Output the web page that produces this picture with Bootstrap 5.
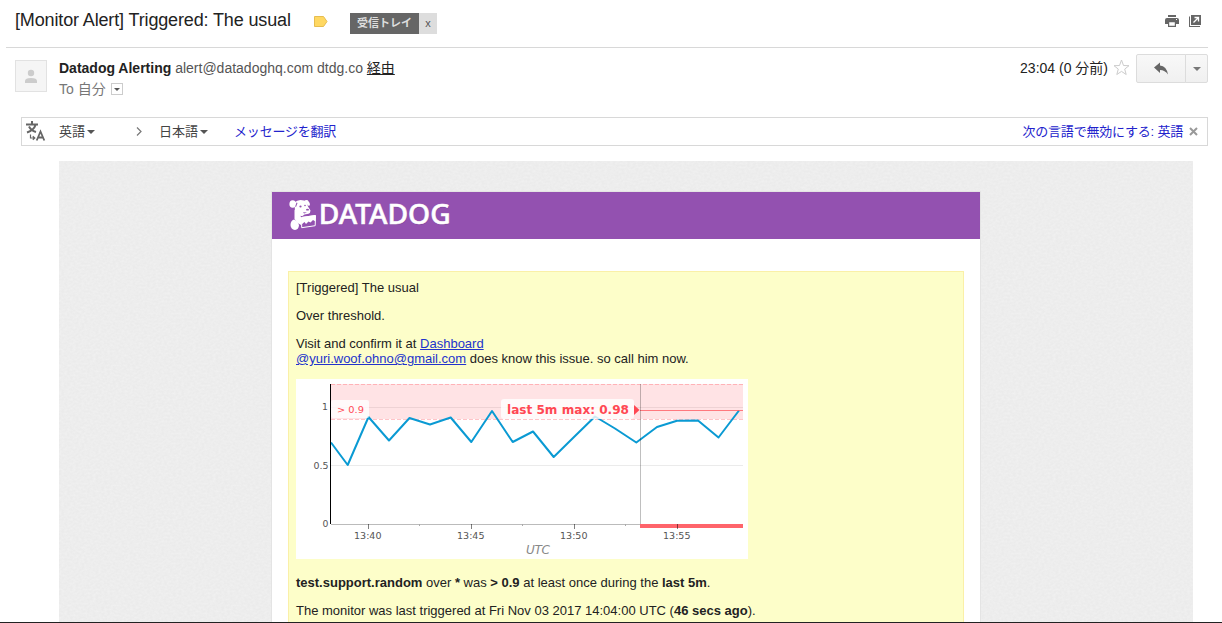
<!DOCTYPE html>
<html lang="ja">
<head>
<meta charset="utf-8">
<title>[Monitor Alert] Triggered: The usual</title>
<link href="https://cdn.jsdelivr.net/npm/bootstrap@5.3.0/dist/css/bootstrap.min.css" rel="stylesheet">
<script src="https://cdn.jsdelivr.net/npm/bootstrap@5.3.0/dist/js/bootstrap.bundle.min.js"></script>
<style>
  body { font-family: "Liberation Sans", "Noto Sans CJK JP", sans-serif; font-size: 13px; line-height: 15px; color: #222; background: #fff; }
  svg { display: block; flex: none; }
  .mail-window { height: 623px; border-bottom: 1px solid #222; }
  .subject-bar { height: 48px; margin-left: 6px; width: 1202px; padding: 0 6px 7px 9px; border-bottom: 1px solid #d8d8d8; }
  .subject { font-size: 18px; line-height: 24px; font-weight: 400; width: 298px; letter-spacing: -.14px; }
  .inbox-label { height: 21px; margin: 6px 0 0 21px; font-size: 11px; line-height: 21px; }
  .inbox-name { width: 69px; background: #666; color: #ddd; font-weight: 700; }
  .inbox-x { width: 18px; background: #ddd; color: #555; }
  .header-tools { padding-top: 2px; }
  .sender-row { height: 69px; width: 1193px; margin-left: 15px; padding-top: 6px; }
  .avatar { width: 32px; height: 32px; margin: 6px 12px 0 0; border: 1px solid #e2e2e2; background: #f5f5f5; }
  .sender { font-size: 14px; line-height: 20px; padding-top: 4px; color: #555; }
  .sender strong, .via { color: #222; }
  .recipient { color: #777; padding-top: 1px; }
  .details-arrow { width: 12px; height: 12px; margin-left: 5px; border: 1px solid #ccc; }
  .caret { width: 0; height: 0; border: 4px solid transparent; border-top-color: #555; border-bottom: 0; }
  .caret-small { border-width: 3px 3px 0; }
  .stamp { font-size: 14px; line-height: 20px; padding-top: 4px; white-space: nowrap; }
  .reply-group { width: 72px; height: 29px; margin-left: 6px; }
  .reply-group .btn { border: 1px solid #dcdcdc; border-radius: 2px; background: linear-gradient(#f8f8f8, #f0f0f0); }
  .btn-group > .btn.reply-main { flex: 0 0 50px; }
  .btn-group > .btn.reply-more { flex: 0 0 23px; }
  .reply-more .caret { border-top-color: #777; }
  .translate-bar { width: 1187px; height: 29px; margin-left: 21px; border: 1px solid #d8d8d8; color: #444; line-height: 20px; }
  .translate-bar .caret { margin-left: 2px; }
  .to-arrow { margin-left: 41px; }
  .lang-to { margin-left: 16px; }
  .blue-link, .blue-link:hover { color: #2222cc; }
  .translate-link { margin-left: 26px; letter-spacing: -.2px; }
  .disable-link { letter-spacing: -.2px; }
  .close-mark { margin: 0 9px 0 6px; }
  .mail-body { margin: 15px 0 0 59px; width: 1134px; height: 461px; padding-top: 31px; background-color: #ebebeb;
    background-image: url("data:image/svg+xml,%3Csvg xmlns='http://www.w3.org/2000/svg' width='120' height='120'%3E%3Cfilter id='f' x='0' y='0' width='1' height='1'%3E%3CfeTurbulence type='fractalNoise' baseFrequency='.35 .5' numOctaves='2' stitchTiles='stitch'/%3E%3CfeColorMatrix values='0 0 0 0 1 0 0 0 0 1 0 0 0 0 1 .5 0 0 0 -.15'/%3E%3C/filter%3E%3Crect width='120' height='120' filter='url(%23f)'/%3E%3C/svg%3E"); }
  .sheet { width: 708px; height: 430px; margin-left: 213px; box-shadow: 0 0 0 1px #e4e4e4; }
  .brand-band { height: 47px; background: #9351b0; }
  .alert-box { width: 676px; height: 351px; margin: 32px 0 0 16px; padding: 8px 7px 0; background: #fdfec9; border: 1px solid #faf0a8; border-bottom: 0; overflow: hidden; }
  .alert-box p { margin: 0 0 13px; white-space: nowrap; }
  .alert-box a { color: #2233cc; }
  .chart { font-family: "DejaVu Sans", sans-serif; margin-bottom: 16px; }
</style>
</head>
<body>
<main class="mail-window overflow-hidden">
  <header class="subject-bar d-flex align-items-center">
    <h1 class="subject m-0 text-nowrap">[Monitor Alert] Triggered: The usual</h1>
    <svg class="mt-1" width="16" height="12" viewBox="0 0 16 12"><path d="M1.500 .5h9l3.500 5-3.500 5h-9z" fill="#ffd862" stroke="#e6bd50"/></svg>
    <div class="inbox-label d-flex text-center"><span class="inbox-name">受信トレイ</span><span class="inbox-x">x</span></div>
    <div class="header-tools ms-auto d-flex align-items-center gap-2">
      <svg width="16" height="14" viewBox="0 0 16 14"><path fill="#666" d="M4 1h8v2H4zM3 4h10q2 0 2 2v4h-3V8H4v2H1V6q0-2 2-2z"/><path fill="#fff" stroke="#666" stroke-width="1.200" d="M4.600 7.600h6.800v4.800H4.600z"/><path fill="#fff" d="M12 5h1v1h-1z"/></svg>
      <svg width="14" height="14" viewBox="0 0 14 14"><path fill="#666" d="M3 1h10v10H3zM1 2.500h1V12h10v1H1z"/><path d="M5.500 8.500 10 4M6.500 3.500H10.500V7.500" fill="none" stroke="#fff" stroke-width="1.300"/></svg>
    </div>
  </header>

  <section class="sender-row d-flex">
    <div class="avatar"><svg width="30" height="30" viewBox="0 0 30 30" fill="#ccc"><circle cx="15" cy="12" r="3.200"/><path d="M9 22v-2q0-3 6-3t6 3v2z"/></svg></div>
    <div class="sender">
      <div class="text-nowrap"><strong>Datadog Alerting</strong> alert@datadoghq.com dtdg.co <u class="via">経由</u></div>
      <div class="recipient d-flex align-items-center">To 自分 <span class="details-arrow d-flex align-items-center justify-content-center"><i class="caret caret-small"></i></span></div>
    </div>
    <div class="ms-auto d-flex">
      <span class="stamp">23:04 (0 分前)</span>
      <svg class="mt-1 ms-1" width="18" height="20" viewBox="0 0 18 20"><path d="m9.500 2 2 5.500 5.500.2-4.300 3.400 1.500 5.400-4.700-3.100-4.700 3.100 1.500-5.400L2 7.700l5.500-.2z" fill="#fff" stroke="#ccc"/></svg>
      <div class="reply-group btn-group">
        <button class="btn reply-main p-0 d-flex align-items-center justify-content-center" aria-label="返信"><svg width="14" height="13" viewBox="0 0 14 13"><path fill="#666" d="M0 5.500 6 .5v3q6.500.5 8 9Q11 8 6 8v3z"/></svg></button>
        <button class="btn reply-more p-0 d-flex align-items-center justify-content-center" aria-label="その他"><i class="caret"></i></button>
      </div>
    </div>
  </section>

  <section class="translate-bar d-flex align-items-center">
    <svg width="37" height="27" viewBox="0 0 37 27"><g fill="none" stroke="#666" stroke-width="2"><path d="M4 6.500h12M10 3v3M13.500 7q-1.500 5-8.500 7.500M7 8.500q2 4 7 5.500"/><path stroke-width="1.200" d="M8.500 16.500v3.500h4M10.800 18.300l2 1.700-2 1.700"/><path stroke-width="1.800" d="m14.700 22.500 3.800-9 3.800 9M16 19.500h5"/></g></svg>
    <span>英語</span><i class="caret"></i>
    <svg class="to-arrow" width="7" height="11" viewBox="0 0 7 11"><path d="m1 1.500 4 4-4 4" fill="none" stroke="#777" stroke-width="1.200"/></svg>
    <span class="lang-to">日本語</span><i class="caret"></i>
    <a class="blue-link translate-link text-decoration-none">メッセージを翻訳</a>
    <a class="blue-link disable-link text-decoration-none ms-auto">次の言語で無効にする: 英語</a>
    <svg class="close-mark" width="9" height="9" viewBox="0 0 9 9"><path d="m1 1 7 7M8 1 1 8" stroke="#999" stroke-width="2"/></svg>
  </section>

  <section class="mail-body">
    <article class="sheet bg-white">
      <div class="brand-band">
        <svg width="200" height="47" viewBox="272 192 200 47">
          <g fill="#fff">
            <ellipse cx="292.700" cy="204" rx="3.300" ry="3.800"/>
            <path d="M294.500 202.500q2.500-2.500 6-2.500 4 0 6 2l1.500 4.500 2.500 4q0 2.500-2 3.300l-4 .7-2 1.500q-6 .5-7.500-4.500z"/>
            <path d="M303.800 201.300q2-1.800 4-1 2.300 2.500 2.200 5-1.500 1.200-2.700-.5l-1-2z"/>
            <path d="M294.500 209.500q2 4.500 5.500 5.500l1.500 3-.5 7q-4-2-6.500-6z"/>
            <path d="M290.500 225q0-4.500 3.500-5.500 4.500 1.500 5 6-.5 4-4 4.500-4.200-.5-4.500-5z"/>
          </g>
          <path fill="#9351b0" stroke="#fff" d="m301.500 217.500 14-2-.3 10.200-13.500 2z"/>
          <path fill="#fff" d="m301.500 217 14-2v6.500l-2.500-1.500-2.500 2.500-2-1-2.500 2.500-1.500-2-3 2.500z"/>
          <g fill="#9351b0"><circle cx="300.500" cy="206.500" r="1.100"/><circle cx="305" cy="205.500" r=".8"/><ellipse cx="307.500" cy="209.700" rx="1.500" ry=".9"/><path d="m296.500 202.500 1 .5-1.500 4-.8-.5zM303 212.300l4 .2-3 .9z"/></g>
          <g font-family="Noto Sans" font-size="26.500" font-weight="500">
            <text x="319.200" y="224.500" fill="#6f3b89" fill-opacity=".45" textLength="132" lengthAdjust="spacingAndGlyphs">DATADOG</text>
            <text x="318.700" y="223.500" fill="#fff" stroke="#fff" stroke-width=".5" textLength="132" lengthAdjust="spacingAndGlyphs">DATADOG</text>
          </g>
        </svg>
      </div>
      <div class="alert-box">
        <p>[Triggered] The usual</p>
        <p>Over threshold.</p>
        <p>Visit and confirm it at <a href="#">Dashboard</a><br><a href="#">@yuri.woof.ohno@gmail.com</a> does know this issue. so call him now.</p>
        <svg class="chart" width="452" height="180" viewBox="296 379 452 180">
          <path fill="#fff" d="M296 379h452v180H296z"/>
          <path stroke="#ebebeb" d="M331 407.500h412M331 465.500h412"/>
          <path fill="#ff4550" fill-opacity=".15" d="M331 384h412v35H331z"/>
          <path stroke="#ff5560" stroke-opacity=".35" stroke-dasharray="4 2" d="M331 384.500h412M331 419.500h412"/>
          <path fill="none" stroke="#0a9ad3" stroke-width="2" stroke-linejoin="round" d="M331 442.500 347.700 465 368.500 417 389 440.500 409.500 418 430 424.500 450.700 417.500 471.300 442 492 411 512.700 442 533 431.500 553.700 457 574 437 595 416.500 615 428.500 636.300 442.500 657 427 677 420.700 698 420.500 718.500 437.500 739 410.500"/>
          <path stroke="#bbb" d="M331 524.500h412"/>
          <path stroke="#000" d="M330.500 384v140"/>
          <path stroke="#ff5c64" stroke-opacity=".8" d="M640 410.500h103"/>
          <path stroke="#000" stroke-opacity=".25" d="M640.500 384v140"/>
          <path fill="#ff646b" d="M640 524h103v4H640z"/>
          <path stroke="#000" stroke-opacity=".5" d="M368.500 524v5M471.500 524v5M574.500 524v5M677.500 524v5"/>
          <path stroke="#aaa" d="M419.500 524v2M522.500 524v2M625.500 524v2"/>
          <rect x="331" y="400" width="38" height="18" rx="2" fill="#fff" fill-opacity=".8"/>
          <rect x="501" y="399" width="133" height="20" rx="3" fill="#fff" fill-opacity=".8"/>
          <path fill="#ff4853" d="m634 405 5.500 5-5.500 5z"/>
          <g fill="#ff4853"><text x="337" y="413" font-size="9.400" textLength="27" lengthAdjust="spacingAndGlyphs">&gt; 0.9</text><text x="507" y="414" font-size="12.400" font-weight="700" textLength="122" lengthAdjust="spacingAndGlyphs">last 5m max: 0.98</text></g>
          <g fill="#555" font-size="9.300"><text x="322" y="410">1</text><text x="313.500" y="469" textLength="15" lengthAdjust="spacingAndGlyphs">0.5</text><text x="322.500" y="527">0</text>
            <text x="354" y="539" textLength="27.500" lengthAdjust="spacingAndGlyphs">13:40</text><text x="457" y="539" textLength="27.500" lengthAdjust="spacingAndGlyphs">13:45</text><text x="560" y="539" textLength="27.500" lengthAdjust="spacingAndGlyphs">13:50</text><text x="663" y="539" textLength="27.500" lengthAdjust="spacingAndGlyphs">13:55</text></g>
          <text x="526" y="554" font-size="12" font-style="italic" fill="#888" textLength="24">UTC</text>
        </svg>
        <p><b>test.support.random</b> over <b>*</b> was <b>&gt; 0.9</b> at least once during the <b>last 5m</b>.</p>
        <p>The monitor was last triggered at Fri Nov 03 2017 14:04:00 UTC (<b>46 secs ago</b>).</p>
      </div>
    </article>
  </section>
</main>
</body>
</html>
